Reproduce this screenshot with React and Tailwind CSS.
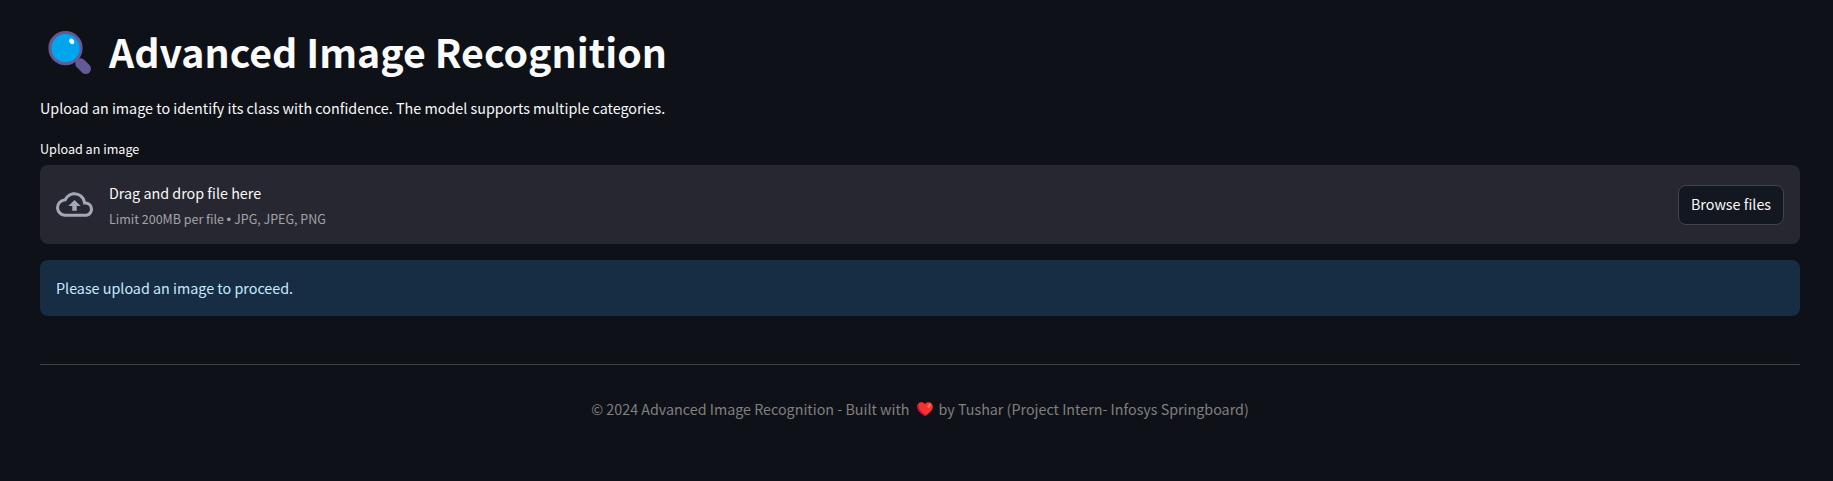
function Magnifier() {
  return (
    <svg className="mr-[15px] ml-[7px] mt-[6px] size-[46px] shrink-0" viewBox="0 0 46 46" aria-hidden="true">
      <path d="M33.5 33.5 38.7 38.7" stroke="#635994" strokeWidth="10.5" strokeLinecap="round" />
      <circle cx="18.5" cy="18.2" r="15.6" fill="#00a6ed" stroke="#635994" strokeWidth="3" />
      <ellipse cx="24.7" cy="11.4" rx="2.3" ry="3" fill="#fff" transform="rotate(-30 24.7 11.4)" />
    </svg>
  );
}

function CloudUpload() {
  return (
    <svg className="size-[37px] shrink-0" viewBox="0 0 24 24" fill="#a3a8b8" aria-hidden="true">
      <path d="M19.35 10.04A7.49 7.49 0 0 0 12 4C9.11 4 6.6 5.64 5.35 8.04A5.994 5.994 0 0 0 0 14c0 3.31 2.69 6 6 6h13c2.76 0 5-2.24 5-5 0-2.64-2.05-4.78-4.65-4.96zM19 18H6c-2.21 0-4-1.79-4-4 0-2.05 1.53-3.76 3.56-3.97l1.07-.11.5-.95A5.469 5.469 0 0 1 12 6c2.62 0 4.88 1.86 5.39 4.43l.3 1.5 1.53.11A2.98 2.98 0 0 1 22 15c0 1.65-1.35 3-3 3zM8 13h2.55v3h2.9v-3H16l-4-4z" />
    </svg>
  );
}

function Heart() {
  return (
    <svg className="h-[14px] w-4 shrink-0" viewBox="0 0 16 14" aria-hidden="true">
      <path d="M8 2.2C6.8.3 4.6-.2 2.8.6.7 1.500-.2 3.800.3 6 1.100 9 4.300 11.800 8 14c3.700-2.200 6.900-5 7.700-8 .5-2.200-.4-4.500-2.500-5.400C11.400-.2 9.200.3 8 2.200z" fill="#f8312f" />
      <path d="M.3 6C1.100 9 4.300 11.800 8 14l1.300-.8C5 11 1.600 7.500 1.300 2 .3 3.100 0 4.600.3 6z" fill="#ca0b4a" />
      <ellipse cx="12.200" cy="3.800" rx="1.500" ry="2.300" fill="#f37366" transform="rotate(35 12.200 3.800)" />
    </svg>
  );
}

export default function App() {
  return (
    <main className="min-h-[481px] bg-[#0e1117] pt-6 pr-[33px] pl-10 font-['Noto_Sans_CJK_SC',sans-serif] text-[14.33px] leading-6 whitespace-nowrap text-[#fafafa]">
      <header className="flex h-[53px] items-start">
        <Magnifier />
        <h1 className="ml-[1px] text-[39.3px] leading-[53px] font-bold">Advanced Image Recognition</h1>
      </header>
      <p className="mt-[19px]">
        Upload an image to identify its class with confidence. The model supports multiple categories.
      </p>
      <label className="mt-[18px] block text-[12.6px] leading-[21px]">Upload an image</label>

      <section className="mt-[6px] flex h-[79px] items-center rounded-lg bg-[#262730] px-4">
        <CloudUpload />
        <div className="ml-4 flex-1">
          <p>Drag and drop file here</p>
          <p className="mt-1 text-[12.5px] leading-5 text-[#a3a3a8]">
            Limit 200MB per file<span className="mx-[2.5px] inline-block w-[5px] font-['Liberation_Sans'] text-[13px] leading-none">•</span>JPG, JPEG, PNG
          </p>
        </div>
        <button className="h-10 w-[106px] rounded-lg border border-[#41444c] bg-[#131720] pb-0.5">Browse files</button>
      </section>

      <div className="mt-4 h-14 rounded-lg bg-[#172d43] p-4 text-[#c7ebff]">Please upload an image to proceed.</div>

      <hr className="mt-12 border-[#3e4044]" />

      <footer className="mt-8 flex items-center justify-center text-[14.3px] text-[#808080]">
        <span>© 2024 Advanced Image Recognition - Built with</span>
        <span className="mr-[6px] ml-[7px] flex"><Heart /></span>
        <span>by Tushar (Project Intern- Infosys Springboard)</span>
      </footer>
    </main>
  );
}
